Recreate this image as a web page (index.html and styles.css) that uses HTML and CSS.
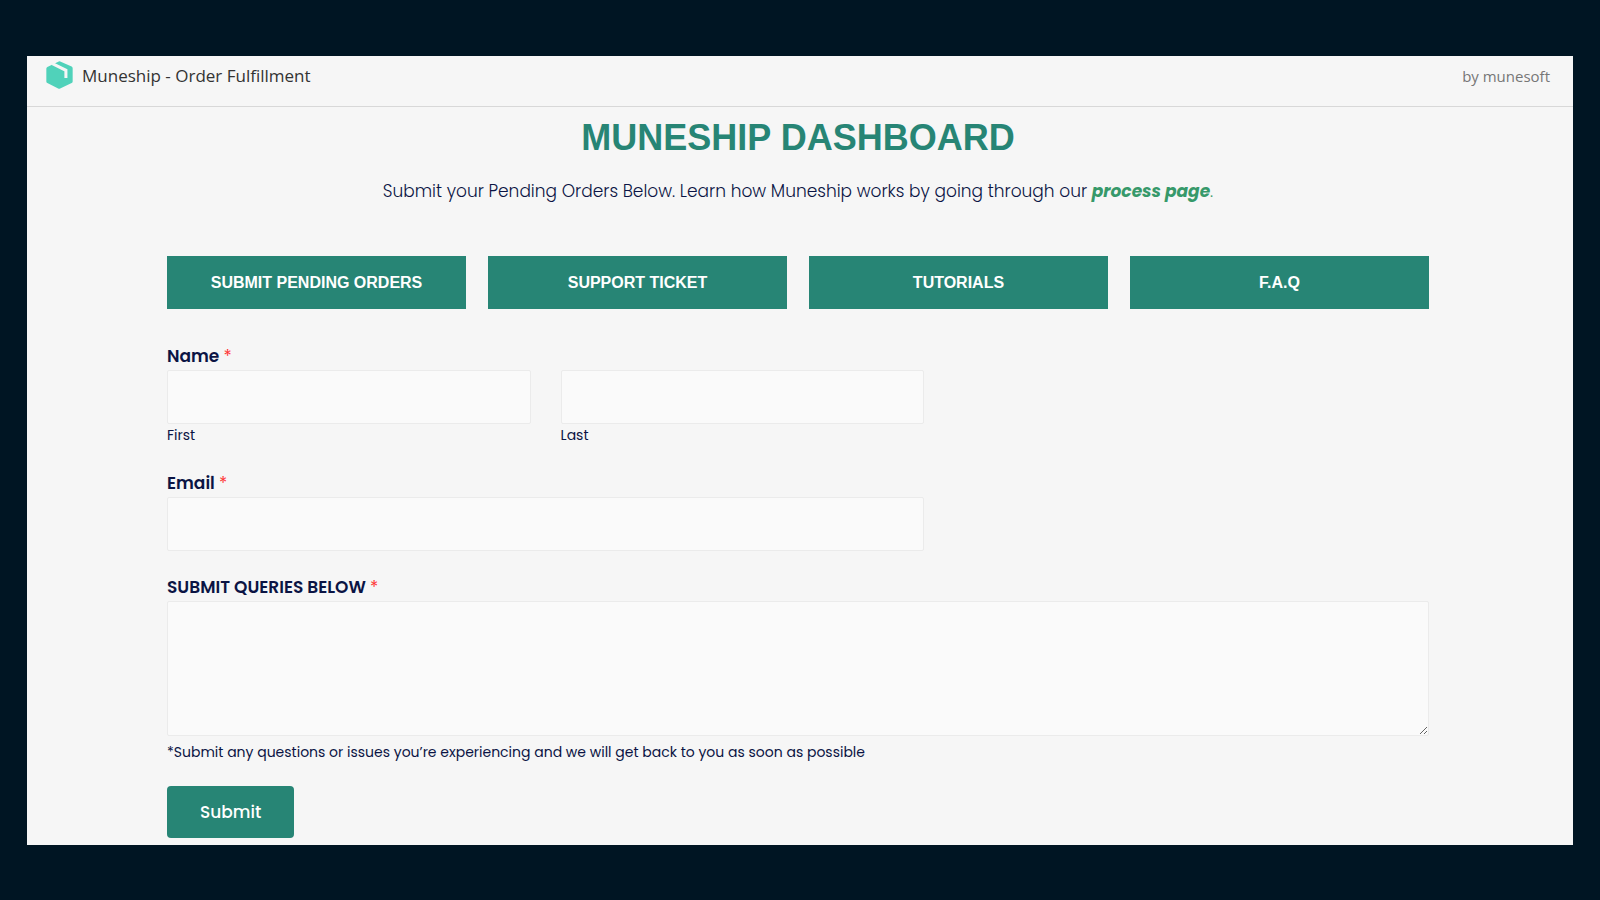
FILE: index.html
```html
<!DOCTYPE html>
<html lang="en">
<head>
  <meta charset="UTF-8">
  <meta name="viewport" content="width=device-width, initial-scale=1.0">
  <title>Muneship - Order Fulfillment</title>
  <link rel="stylesheet" href="styles.css">
</head>
<body>
  <div class="app">
    <header class="topbar">
      <div class="brand">
        <svg class="logo" viewBox="0 0 80 82" aria-hidden="true">
          <path d="M38 1 Q40 0 42 1 L76 16 Q79 18 79 21 V60 Q79 63 76 65 L42 81 Q39 82 36 81 L4 65 Q1 63 1 60 V22 Q1 19 4 17 Z" fill="#50d2ba"/>
          <path d="M19 7 L59 27 V50" fill="none" stroke="#f6f6f6" stroke-width="9"/>
        </svg>
        <span class="brand-name">Muneship - Order Fulfillment</span>
      </div>
      <span class="by">by munesoft</span>
    </header>

    <main class="content">
      <h1>MUNESHIP DASHBOARD</h1>
      <p class="intro">Submit your Pending Orders Below. Learn how Muneship works by going through our <a href="#">process page</a><span class="dot">.</span></p>

      <nav class="tabs">
        <button type="button">SUBMIT PENDING ORDERS</button>
        <button type="button">SUPPORT TICKET</button>
        <button type="button">TUTORIALS</button>
        <button type="button">F.A.Q</button>
      </nav>

      <form class="ticket-form">
        <fieldset class="field half">
          <legend class="label">Name <span class="required">*</span></legend>
          <div class="name-row">
            <div class="name-col">
              <input type="text" id="first">
              <label class="sublabel" for="first">First</label>
            </div>
            <div class="name-col">
              <input type="text" id="last">
              <label class="sublabel" for="last">Last</label>
            </div>
          </div>
        </fieldset>

        <div class="field half">
          <label class="label" for="email">Email <span class="required">*</span></label>
          <input type="email" id="email">
        </div>

        <div class="field">
          <label class="label" for="queries">SUBMIT QUERIES BELOW <span class="required">*</span></label>
          <textarea id="queries"></textarea>
          <div class="sublabel note">*Submit any questions or issues you’re experiencing and we will get back to you as soon as possible</div>
        </div>

        <button type="submit" class="submit">Submit</button>
      </form>
    </main>
  </div>
</body>
</html>
```
FILE: styles.css
```css
* {
  box-sizing: border-box;
}
body {
  margin: 0;
  padding: 56px 27px 55px;
  background-color: #001523;
  color: #0b1444;
  font-family: Poppins, Inter, sans-serif;
  font-size: 17px;
}
.app {
  background-color: #f6f6f6;
}
.topbar {
  display: flex;
  justify-content: space-between;
  height: 51px;
  padding: 5px 23px 0 19px;
  border-bottom: 1px solid #d8d8d8;
  font-family: "Segoe UI", "Open Sans", sans-serif;
  line-height: 30px;
}
.brand {
  display: flex;
  gap: 9px;
}
.logo {
  width: 27px;
  height: 28px;
}
.brand-name {
  color: #333;
}
.by {
  color: #777;
  font-size: 15px;
}
.content {
  padding: 11px 144px 7px 140px;
}
h1 {
  margin: 0;
  color: #278575;
  font-family: Arial, "Liberation Sans", sans-serif;
  font-size: 36px;
  line-height: 40px;
  text-align: center;
}
.intro {
  margin: 19px 0 51px;
  line-height: 28px;
  text-align: center;
  font-weight: 300;
}
.intro a {
  color: #36996a;
  font-weight: 700;
  font-style: italic;
  text-decoration: none;
}
.dot {
  color: #36996a;
}
.tabs {
  display: grid;
  grid-template-columns: repeat(4, 1fr);
  gap: 22px;
  margin-bottom: 35px;
}
.tabs button {
  height: 53px;
  border: none;
  background-color: #278575;
  color: #fff;
  font-family: Arial, "Liberation Sans", sans-serif;
  font-size: 16px;
  font-weight: 700;
  cursor: pointer;
}
.field {
  margin: 0 0 24px;
  padding: 0;
  border: none;
}
.half {
  width: 60%;
}
.label {
  display: block;
  padding: 0 0 1px;
  line-height: 25px;
  font-weight: 600;
}
.required {
  color: #f33;
  font-weight: 400;
}
.name-row {
  display: grid;
  grid-template-columns: 1fr 1fr;
  gap: 30px;
}
input,
textarea {
  display: block;
  width: 100%;
  height: 54px;
  padding: 12px;
  border: 1px solid #ebebeb;
  border-radius: 2px;
  background-color: #fafafa;
  font: inherit;
}
textarea {
  height: 135px;
  resize: vertical;
}
.sublabel {
  display: block;
  font-size: 14px;
  line-height: 23px;
}
.note {
  padding-top: 6px;
  line-height: 20px;
}
.submit {
  display: block;
  height: 52px;
  padding: 0 33px;
  border: none;
  border-radius: 4px;
  background-color: #278575;
  color: #fff;
  font: inherit;
  font-weight: 500;
  cursor: pointer;
}
```
